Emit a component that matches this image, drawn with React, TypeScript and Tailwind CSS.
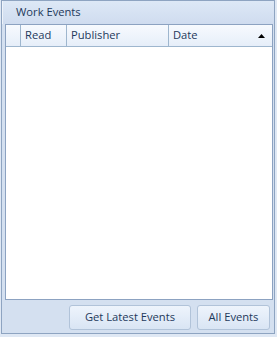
import React from 'react'

const font = { fontFamily: '"Open Sans", "Noto Sans", sans-serif' }

const columns = [
  { key: 'sel', label: '', width: 'w-[15px]' },
  { key: 'read', label: 'Read', width: 'w-[46px]' },
  { key: 'publisher', label: 'Publisher', width: 'w-[102px]' },
]

export default function App() {
  return (
    <div className="w-[277px] h-[337px] bg-[#dfe8f4] pl-[1px]" style={font}>
      <div className="w-[274px] h-[334px] border border-[#8ea4c1] bg-[#d4e0f0] flex flex-col">
        <div className="h-[23px] shrink-0 border-l border-[#eef3fa] bg-gradient-to-b from-[#dde8f6] to-[#cfdcef] flex items-center pl-[13px] text-[11.2px] text-[#1e395b]">
          Work Events
        </div>
        <div className="ml-[3px] w-[268px] h-[276px] border border-[#8ca2c1] bg-white flex flex-col">
          <div className="h-[22px] flex border-b border-[#9eb6ce] bg-gradient-to-b from-[#f7fafe] to-[#e6eef9] text-[11.2px] text-[#1e395b]">
            {columns.map((c) => (
              <div
                key={c.key}
                className={`${c.width} shrink-0 border-r border-[#9eb6ce] flex items-center pl-[4px]`}
              >
                {c.label}
              </div>
            ))}
            <div className="flex-1 flex items-center justify-between pl-[4px] pr-[7px]">
              <span>Date</span>
              <svg width="7" height="4" viewBox="0 0 7 4">
                <path d="M3.5 0 L7 4 L0 4 Z" fill="#000" />
              </svg>
            </div>
          </div>
          <div className="flex-1" />
        </div>
        <div className="flex-1 flex items-center justify-end gap-[6px] pr-[4px] pt-[1px]">
          <button className="w-[122px] h-[25px] rounded-[3px] border border-[#b1c3d9] bg-gradient-to-b from-[#eef4fc] to-[#d9e5f4] text-[11.2px] text-[#1e395b]">
            Get Latest Events
          </button>
          <button className="w-[73px] h-[25px] rounded-[3px] border border-[#b1c3d9] bg-gradient-to-b from-[#eef4fc] to-[#d9e5f4] text-[11.2px] text-[#1e395b]">
            All Events
          </button>
        </div>
      </div>
    </div>
  )
}
